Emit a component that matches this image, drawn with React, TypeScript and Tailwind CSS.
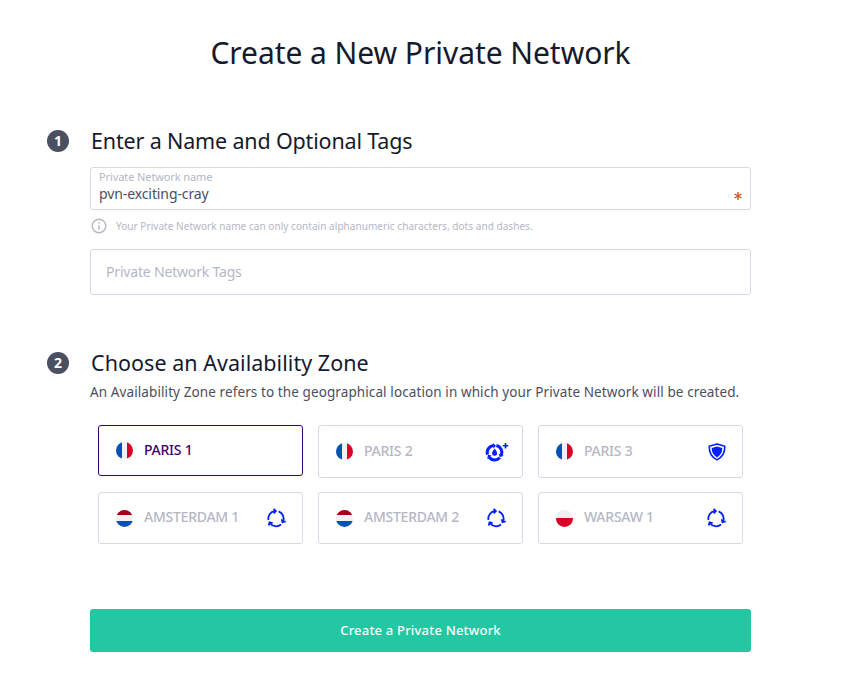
import React, { useState } from 'react';
import clsx from 'clsx';

type Country = 'FR' | 'NL' | 'PL';
type Badge = 'cycle' | 'water' | 'shield';

interface Zone {
  name: string;
  country: Country;
  badge?: Badge;
}

const zones: Zone[] = [
  { name: 'PARIS 1', country: 'FR' },
  { name: 'PARIS 2', country: 'FR', badge: 'water' },
  { name: 'PARIS 3', country: 'FR', badge: 'shield' },
  { name: 'AMSTERDAM 1', country: 'NL', badge: 'cycle' },
  { name: 'AMSTERDAM 2', country: 'NL', badge: 'cycle' },
  { name: 'WARSAW 1', country: 'PL', badge: 'cycle' },
];

const Flag: React.FC<{ country: Country }> = ({ country }) => (
  <span
    className={clsx(
      'flex size-[17px] shrink-0 overflow-hidden rounded-full',
      country !== 'FR' && 'flex-col'
    )}
  >
    {country === 'FR' && (
      <>
        <span className="flex-1 bg-[#0052b4]" />
        <span className="flex-1 bg-[#f0f0f0]" />
        <span className="flex-1 bg-[#d80027]" />
      </>
    )}
    {country === 'NL' && (
      <>
        <span className="flex-1 bg-[#a2001d]" />
        <span className="flex-1 bg-[#f0f0f0]" />
        <span className="flex-1 bg-[#0052b4]" />
      </>
    )}
    {country === 'PL' && (
      <>
        <span className="flex-1 bg-[#f0f0f0]" />
        <span className="flex-1 bg-[#d80027]" />
      </>
    )}
  </span>
);

const CycleIcon = () => (
  <svg viewBox="-10 -10 20 20" className="size-5" fill="none" stroke="#0320fa" strokeWidth="1.8">
    {[0, 120, 240].map((angle) => (
      <g key={angle} transform={`translate(0 .6) rotate(${angle})`}>
        <path d="M-7.6 1.4A7.7 7.7 0 0 1-.8-7.6" />
        <path d="M-2.4-9.8-.1-7.5-2.3-5.2" />
      </g>
    ))}
  </svg>
);

const WaterIcon = () => (
  <svg viewBox="0 0 24 20" className="h-5 w-6">
    <g transform="translate(9.6 10.6)" fill="none" stroke="#0320fa">
      {[0, 120, 240].map((angle) => (
        <g key={angle} transform={`rotate(${angle})`}>
          <path d="M-7.1 2A7.2 7.2 0 0 1-1.2-7.1" strokeWidth="3.1" />
          <path d="M-1.8-9.6 1.4-6.8-1.1-4Z" fill="#0320fa" stroke="none" />
        </g>
      ))}
    </g>
    <path d="M9.6 6.6c1.2 1.8 2.5 3.100 2.500 4.600a2.500 2.500 0 0 1-5 0c0-1.500 1.300-2.800 2.500-4.600Z" fill="#0320fa" />
    <path d="M20.500 1v5.400M17.800 3.700h5.400" stroke="#0320fa" strokeWidth="1.600" />
  </svg>
);

const ShieldIcon = () => (
  <svg viewBox="0 0 18 20" className="h-5 w-[18px]">
    <path
      d="M9 1.900 16.800 4.300c.2 6.200-2.200 10.800-7.800 13.600C3.400 15.100 1 10.500 1.200 4.300Z"
      fill="none"
      stroke="#0320fa"
      strokeWidth="1.600"
      strokeLinejoin="round"
    />
    <path d="M9 4.500 14.300 6.100c0 4.100-1.600 7.200-5.300 9.300-3.700-2.100-5.300-5.200-5.300-9.300Z" fill="#0320fa" />
  </svg>
);

const ZoneBadge: React.FC<{ badge: Badge }> = ({ badge }) => {
  if (badge === 'cycle') return <CycleIcon />;
  if (badge === 'water') return <WaterIcon />;
  return <ShieldIcon />;
};

interface ZoneCardProps {
  zone: Zone;
  selected: boolean;
  onSelect: () => void;
}

const ZoneCard: React.FC<ZoneCardProps> = ({ zone, selected, onSelect }) => {
  const isWater = zone.badge === 'water';

  return (
    <button
      type="button"
      onClick={onSelect}
      className={clsx(
        'flex w-full cursor-pointer items-center rounded-[3px] border pl-[17px] text-left',
        isWater ? 'pr-[13px]' : 'pr-4',
        selected ? 'h-[51px] border-[#3f0070]' : 'h-full border-[#d4dae7]'
      )}
    >
      <Flag country={zone.country} />
      <span
        className={clsx(
          'ml-[11px] flex-1 pb-[2px] text-[14px] leading-5 font-medium tracking-[-0.25px]',
          selected ? 'text-[#3f0070]' : 'text-[#b5b7c6]'
        )}
      >
        {zone.name}
      </span>
      {zone.badge && <ZoneBadge badge={zone.badge} />}
    </button>
  );
};

const StepNumber: React.FC<{ value: number }> = ({ value }) => (
  <span className="mr-[22px] flex size-[22px] shrink-0 items-center justify-center rounded-full bg-[#4a4f62] pb-px text-[14px] leading-none font-bold text-white">
    {value}
  </span>
);

export default function App() {
  const [name, setName] = useState('pvn-exciting-cray');
  const [tags, setTags] = useState('');
  const [selected, setSelected] = useState('PARIS 1');

  return (
    <div className="h-[690px] w-[843px] bg-white pt-8 font-['Noto_Sans',sans-serif] text-[#151a2d]">
      <h1 className="pr-[2px] text-center text-[30px] leading-[42px] tracking-[-0.06px]">Create a New Private Network</h1>

      <section className="mt-[52px] pr-[92px] pl-[47px]">
        <div className="flex h-[30px] items-center">
          <StepNumber value={1} />
          <h2 className="text-[21.5px] leading-[30px] tracking-[-0.16px]">Enter a Name and Optional Tags</h2>
        </div>
        <div className="mt-[11px] ml-[43px]">
          <label className="flex h-[43px] items-end justify-between rounded-[3px] border border-[#d4dae7] px-2">
            <span className="flex flex-1 flex-col pb-[5px]">
              <span className="text-[11px] leading-[15px] tracking-[-0.1px] text-[#b5b7c6]">Private Network name</span>
              <input
                value={name}
                onChange={(e) => setName(e.target.value)}
                className="h-[20px] text-[14px] leading-5 tracking-[-0.1px] text-[#4a4f62] outline-none"
              />
            </span>
            <svg viewBox="0 0 8 8" className="mb-[9px] size-2" stroke="#d5541c" strokeWidth="1.400">
              <path d="M4 0v8M.5 2l7 4M.5 6l7-4" />
            </svg>
          </label>
          <p className="mt-2 flex h-4 items-center text-[10px] leading-4 tracking-[0.05px] text-[#b5b7c6]">
            <svg viewBox="0 0 16 16" className="mr-[9px] ml-px size-4" fill="none" stroke="#b5b7c6" strokeWidth="1.400">
              <circle cx="8" cy="8" r="6.800" />
              <path d="M8 7.200v4.300M8 4.300v1.500" strokeWidth="1.500" />
            </svg>
            Your Private Network name can only contain alphanumeric characters, dots and dashes.
          </p>
          <input
            value={tags}
            onChange={(e) => setTags(e.target.value)}
            placeholder="Private Network Tags"
            className="mt-[15px] block h-[46px] w-full rounded-[3px] border border-[#d4dae7] px-[15px] pb-[2px] text-[14px] tracking-[-0.18px] outline-none placeholder:text-[#b5b7c6]"
          />
        </div>
      </section>

      <section className="mt-[53px] pr-[92px] pl-[47px]">
        <div className="flex h-[30px] items-center">
          <StepNumber value={2} />
          <h2 className="text-[21.5px] leading-[30px] tracking-[0.04px]">Choose an Availability Zone</h2>
        </div>
        <div className="ml-[43px]">
          <p className="mt-1 text-[13.5px] leading-5 tracking-[0.1px] whitespace-nowrap text-[#4a4f62]">
            An Availability Zone refers to the geographical location in which your Private Network will be created.
          </p>
          <div className="mx-2 mt-[23px] grid grid-cols-3 grid-rows-[53px_52px] gap-x-[15px] gap-y-[14px]">
            {zones.map((zone) => (
              <ZoneCard
                key={zone.name}
                zone={zone}
                selected={zone.name === selected}
                onSelect={() => setSelected(zone.name)}
              />
            ))}
          </div>
          <button
            type="button"
            className="mt-[65px] h-[43px] w-full cursor-pointer rounded-[3px] bg-[#23c8a3] text-[13px] font-medium tracking-[0.2px] text-white"
          >
            Create a Private Network
          </button>
        </div>
      </section>
    </div>
  );
}
